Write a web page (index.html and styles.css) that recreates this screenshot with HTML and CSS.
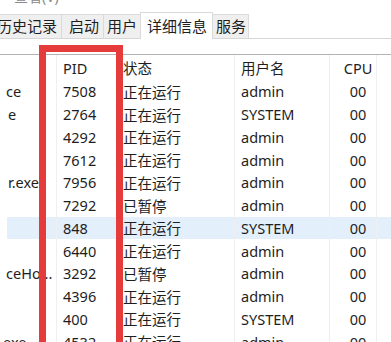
FILE: index.html
```html
<!DOCTYPE html>
<html lang="zh-CN">
<head>
<meta charset="utf-8">
<title>详细信息</title>
<link rel="stylesheet" href="styles.css">
</head>
<body>
<div class="window">
  <div class="menubar"><span class="menu-text">查看(V)</span></div>
  <div class="tabstrip">
    <div class="tab tab-history">历史记录</div>
    <div class="tab tab-startup">启动</div>
    <div class="tab tab-users">用户</div>
    <div class="tab tab-details active">详细信息</div>
    <div class="tab tab-services">服务</div>
  </div>
  <div class="table">
    <div class="row head">
      <div class="cell name"></div>
      <div class="cell pid">PID</div>
      <div class="cell status">状态</div>
      <div class="cell user">用户名</div>
      <div class="cell cpu">CPU</div>
      <div class="cell rest"></div>
    </div>
    <div class="row"><div class="cell name">ce</div><div class="cell pid">7508</div><div class="cell status">正在运行</div><div class="cell user">admin</div><div class="cell cpu">00</div><div class="cell rest"></div></div>
    <div class="row"><div class="cell name n2">e</div><div class="cell pid">2764</div><div class="cell status">正在运行</div><div class="cell user">SYSTEM</div><div class="cell cpu">00</div><div class="cell rest"></div></div>
    <div class="row"><div class="cell name"></div><div class="cell pid">4292</div><div class="cell status">正在运行</div><div class="cell user">admin</div><div class="cell cpu">00</div><div class="cell rest"></div></div>
    <div class="row"><div class="cell name"></div><div class="cell pid">7612</div><div class="cell status">正在运行</div><div class="cell user">admin</div><div class="cell cpu">00</div><div class="cell rest"></div></div>
    <div class="row"><div class="cell name n5">r.exe</div><div class="cell pid">7956</div><div class="cell status">正在运行</div><div class="cell user">admin</div><div class="cell cpu">00</div><div class="cell rest"></div></div>
    <div class="row"><div class="cell name"></div><div class="cell pid">7292</div><div class="cell status">已暂停</div><div class="cell user">admin</div><div class="cell cpu">00</div><div class="cell rest"></div></div>
    <div class="row selected"><div class="cell name"></div><div class="cell pid">848</div><div class="cell status">正在运行</div><div class="cell user">SYSTEM</div><div class="cell cpu">00</div><div class="cell rest"></div></div>
    <div class="row"><div class="cell name"></div><div class="cell pid">6440</div><div class="cell status">正在运行</div><div class="cell user">admin</div><div class="cell cpu">00</div><div class="cell rest"></div></div>
    <div class="row"><div class="cell name">ceHo...</div><div class="cell pid">3292</div><div class="cell status">已暂停</div><div class="cell user">admin</div><div class="cell cpu">00</div><div class="cell rest"></div></div>
    <div class="row"><div class="cell name"></div><div class="cell pid">4396</div><div class="cell status">正在运行</div><div class="cell user">admin</div><div class="cell cpu">00</div><div class="cell rest"></div></div>
    <div class="row"><div class="cell name"></div><div class="cell pid">400</div><div class="cell status">正在运行</div><div class="cell user">SYSTEM</div><div class="cell cpu">00</div><div class="cell rest"></div></div>
    <div class="row"><div class="cell name n12">exe</div><div class="cell pid">4532</div><div class="cell status">正在运行</div><div class="cell user">admin</div><div class="cell cpu">00</div><div class="cell rest"></div></div>
  </div>
  <div class="highlight-box"></div>
</div>
</body>
</html>
```

FILE: styles.css
```css
* { box-sizing: border-box; }

html, body {
  margin: 0;
  padding: 0;
  background: #ffffff;
}

body {
  width: 391px;
  height: 342px;
  overflow: hidden;
  font-family: "Noto Sans", "Noto Sans CJK SC", sans-serif;
  font-size: 14.5px;
  color: #1e1e1e;
}

.window {
  position: relative;
  width: 391px;
  height: 342px;
  overflow: hidden;
}

.menubar {
  height: 12px;
  overflow: hidden;
  display: flex;
  align-items: flex-end;
  padding-left: 14px;
}

.menu-text {
  font-size: 14px;
  line-height: 14px;
  margin-bottom: 8px;
  color: #8a8a8a;
}

.tabstrip {
  display: flex;
  align-items: flex-end;
  height: 27px;
  border-bottom: 1px solid #d6d6d6;
  font-size: 15px;
}

.tab {
  height: 24px;
  line-height: 22px;
  background: #efefef;
  border: 1px solid #dadada;
  border-bottom: none;
  white-space: nowrap;
}

.tab + .tab { margin-left: -1px; }

.tab-history {
  margin-left: -3px;
  padding: 0 4px 0 0;
  border-left: none;
}

.tab-startup { padding: 0 4px 0 7px; }

.tab-users { padding: 0 3px 0 3px; }

.tab-details { padding: 0 5px 0 6px; }

.tab-services { padding: 0 2px 0 3px; }

.tab.active {
  height: 27px;
  line-height: 26px;
  background: #ffffff;
  margin-bottom: -1px;
  position: relative;
}

.table {
  margin-top: 15px;
  border-top: 1px solid #b3b3b3;
}

.row {
  display: grid;
  grid-template-columns: 57px 60px 118px 95px 47px 1fr;
  height: 22.76px;
  align-items: stretch;
}

.row.head {
  height: 25px;
}

.row.selected {
  background: linear-gradient(to right, transparent 7px, #e3f0fb 7px);
}

.cell {
  display: flex;
  align-items: center;
  white-space: nowrap;
  overflow: hidden;
  border-right: 1px solid #efefef;
  padding-left: 6px;
}

.cell.rest { border-right: none; }

.cell.name { padding-left: 6px; }
.cell.name.n2 { padding-left: 8px; }
.cell.name.n5 { padding-left: 8px; }
.cell.name.n12 { padding-left: 3px; }

.cell.cpu {
  justify-content: center;
  padding-left: 10px;
}

.highlight-box {
  position: absolute;
  left: 39px;
  top: 45px;
  width: 84px;
  height: 400px;
  border: 7px solid #e63b3b;
}
```
